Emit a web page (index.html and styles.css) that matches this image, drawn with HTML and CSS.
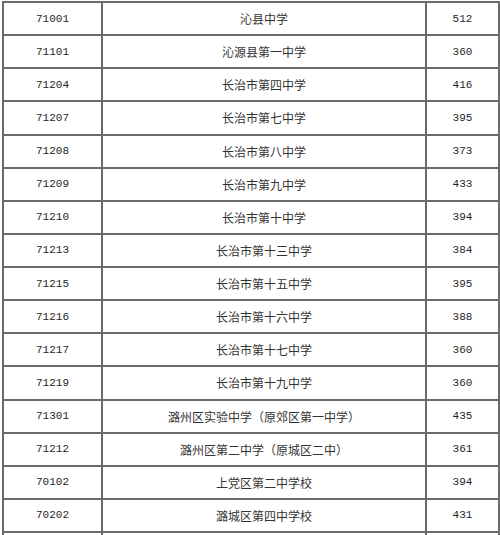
FILE: index.html
```html
<!DOCTYPE html>
<html lang="zh">
<head>
<meta charset="utf-8">
<title>学校列表</title>
<link rel="stylesheet" href="styles.css">
</head>
<body>
<div class="page">
<table class="grid">
<colgroup><col class="c-code"><col class="c-name"><col class="c-score"></colgroup>
<tbody>
<tr><td class="num">71001</td><td class="name">沁县中学</td><td class="num">512</td></tr>
<tr><td class="num">71101</td><td class="name">沁源县第一中学</td><td class="num">360</td></tr>
<tr><td class="num">71204</td><td class="name">长治市第四中学</td><td class="num">416</td></tr>
<tr><td class="num">71207</td><td class="name">长治市第七中学</td><td class="num">395</td></tr>
<tr><td class="num">71208</td><td class="name">长治市第八中学</td><td class="num">373</td></tr>
<tr><td class="num">71209</td><td class="name">长治市第九中学</td><td class="num">433</td></tr>
<tr><td class="num">71210</td><td class="name">长治市第十中学</td><td class="num">394</td></tr>
<tr><td class="num">71213</td><td class="name">长治市第十三中学</td><td class="num">384</td></tr>
<tr><td class="num">71215</td><td class="name">长治市第十五中学</td><td class="num">395</td></tr>
<tr><td class="num">71216</td><td class="name">长治市第十六中学</td><td class="num">388</td></tr>
<tr><td class="num">71217</td><td class="name">长治市第十七中学</td><td class="num">360</td></tr>
<tr><td class="num">71219</td><td class="name">长治市第十九中学</td><td class="num">360</td></tr>
<tr><td class="num">71301</td><td class="name">潞州区实验中学（原郊区第一中学）</td><td class="num">435</td></tr>
<tr><td class="num">71212</td><td class="name">潞州区第二中学（原城区二中）</td><td class="num">361</td></tr>
<tr><td class="num">70102</td><td class="name">上党区第二中学校</td><td class="num">394</td></tr>
<tr><td class="num">70202</td><td class="name">潞城区第四中学校</td><td class="num">431</td></tr>
<tr><td class="num"></td><td class="name"></td><td class="num"></td></tr>
</tbody>
</table>
</div>
</body>
</html>
```

FILE: styles.css
```css
html, body {
  margin: 0;
  padding: 0;
  background: #ffffff;
  overflow: hidden;
}
.page {
  padding: 1px 0 0 2px;
  width: 500px;
  height: 535px;
  box-sizing: border-box;
  overflow: hidden;
}
.grid {
  border-collapse: collapse;
  table-layout: fixed;
  width: 496px;
  color: #262626;
}
.c-code { width: 99px; }
.c-name { width: 324px; }
.c-score { width: 73px; }
.grid td {
  border: 2px solid #6a6a6a;
  height: 31.13px;
  padding: 0;
  text-align: center;
  vertical-align: middle;
}
.num {
  font-family: "Liberation Mono", monospace;
  font-size: 11px;
}
.name {
  font-family: "Noto Sans CJK SC", sans-serif;
  font-size: 12px;
  color: #333;
}
```
